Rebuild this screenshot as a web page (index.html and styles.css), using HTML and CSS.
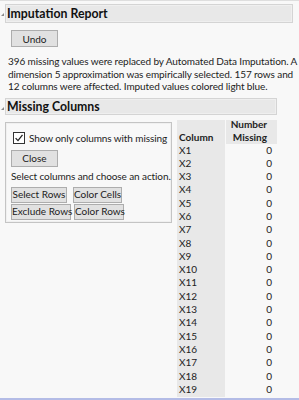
FILE: index.html
```html
<!DOCTYPE html>
<html>
<head>
<meta charset="utf-8">
<link rel="stylesheet" href="styles.css">
</head>
<body>
<div class="page">
  <div class="hdr hdr-main"><span class="tri"></span><span class="title">Imputation Report</span></div>
  <button class="btn undo">Undo</button>
  <p class="msg">396 missing values were replaced by Automated Data Imputation. A<br>dimension 5 approximation was empirically selected. 157 rows and<br>12 columns were affected. Imputed values colored light blue.</p>
  <div class="hdr hdr-mc"><span class="tri"></span><span class="title">Missing Columns</span></div>
  <div class="mc-body">
    <div class="panel">
      <div class="chk-row"><span class="chk"><svg width="10" height="10" viewBox="0 0 10 10"><path d="M1.6 5.1 L4 7.6 L8.5 1.9" fill="none" stroke="#222" stroke-width="1.3"/></svg></span><span class="chk-label">Show only columns with missing</span></div>
      <button class="btn close">Close</button>
      <div class="hint">Select columns and choose an action.</div>
      <div class="btn-row">
        <button class="btn b-sel">Select Rows</button>
        <button class="btn b-cc">Color Cells</button>
      </div>
      <div class="btn-row row2">
        <button class="btn b-ex">Exclude Rows</button>
        <button class="btn b-cr">Color Rows</button>
      </div>
    </div>
    <div class="tbl">
      <div class="col col-name">
        <div class="th">Column</div>
        <div class="td">X1</div><div class="td">X2</div><div class="td">X3</div><div class="td">X4</div><div class="td">X5</div><div class="td">X6</div><div class="td">X7</div><div class="td">X8</div><div class="td">X9</div><div class="td">X10</div><div class="td">X11</div><div class="td">X12</div><div class="td">X13</div><div class="td">X14</div><div class="td">X15</div><div class="td">X16</div><div class="td">X17</div><div class="td">X18</div><div class="td">X19</div>
      </div>
      <div class="col col-num">
        <div class="th">Number<br>Missing</div>
        <div class="td">0</div><div class="td">0</div><div class="td">0</div><div class="td">0</div><div class="td">0</div><div class="td">0</div><div class="td">0</div><div class="td">0</div><div class="td">0</div><div class="td">0</div><div class="td">0</div><div class="td">0</div><div class="td">0</div><div class="td">0</div><div class="td">0</div><div class="td">0</div><div class="td">0</div><div class="td">0</div><div class="td">0</div>
      </div>
    </div>
  </div>
</div>
</body>
</html>
```
FILE: styles.css
```css
html, body {
  margin: 0;
  padding: 0;
  background: #f8f8f8;
}
body {
  font-family: "Lato", "Noto Sans", sans-serif;
  font-size: 10px;
  color: #222;
}
.page {
  width: 299px;
  height: 400px;
  overflow: hidden;
  box-sizing: border-box;
  border-top: 1px solid #dedede;
  border-bottom: 2px solid #b4bce6;
}
.hdr {
  display: flex;
  align-items: center;
  margin-left: 5px;
  background: #e8e8e8;
  border: 1px solid #d4d4d4;
  box-shadow: inset 0 0 0 1px #efefef;
  box-sizing: border-box;
  position: relative;
}
.hdr-main {
  margin-top: 3px;
  width: 288px;
  height: 19px;
}
.hdr-mc {
  margin-top: 5px;
  width: 272px;
  height: 17px;
}
.tri {
  position: absolute;
  left: -5px;
  top: 8px;
  width: 0;
  height: 0;
  border-left: 3px solid transparent;
  border-bottom: 3px solid #8a8a8a;
}
.title {
  font-weight: bold;
  font-size: 12.3px;
  color: #111;
  padding-left: 1px;
}
.btn {
  display: block;
  font-family: inherit;
  font-size: 10px;
  color: #222;
  background: #e1e1e1;
  border: 1px solid #adadad;
  height: 17px;
  padding: 0;
  margin: 0;
  line-height: 14px;
  box-sizing: border-box;
  text-align: center;
  white-space: nowrap;
}
.undo {
  width: 47px;
  margin: 7px 0 0 11px;
}
.msg {
  margin: 8px 0 0 8px;
  line-height: 12.5px;
  white-space: nowrap;
  letter-spacing: -0.1px;
}
.mc-body {
  display: flex;
  align-items: flex-start;
  margin-top: 5px;
  margin-left: 5px;
  gap: 5px;
}
.panel {
  width: 167px;
  height: 101px;
  box-sizing: border-box;
  border: 1px solid #c4c4c4;
  box-shadow: inset 0 0 0 1px #f0f0f0;
  margin-top: 2px;
  padding: 9px 0 0 5px;
  overflow: hidden;
}
.chk-row {
  display: flex;
  align-items: center;
  height: 12px;
  white-space: nowrap;
  letter-spacing: -0.1px;
}
.chk {
  width: 12px;
  height: 12px;
  box-sizing: border-box;
  border: 1px solid #333;
  background: #fff;
  display: flex;
  align-items: center;
  justify-content: center;
  margin-left: 2px;
  margin-right: 4px;
  flex: none;
}
.close {
  width: 47px;
  margin-top: 6px;
}
.hint {
  margin-top: 3px;
  line-height: 13px;
  height: 13px;
  white-space: nowrap;
  letter-spacing: -0.1px;
}
.btn-row {
  display: flex;
  margin-top: 4px;
}
.btn-row .btn {
  height: 16px;
  line-height: 13px;
}
.row2 {
  margin-top: 1px;
}
.b-sel { width: 56px; }
.b-cc { width: 49px; margin-left: 6px; }
.b-ex { width: 60px; }
.b-cr { width: 50px; margin-left: 3px; }
.tbl {
  display: flex;
  gap: 1px;
}
.col {
  display: flex;
  flex-direction: column;
}
.col-name {
  width: 48px;
  background: #e8e8e8;
  height: 277px;
}
.col-num {
  width: 51px;
}
.th {
  font-weight: bold;
  height: 24px;
  box-sizing: border-box;
  line-height: 13px;
  display: flex;
  align-items: flex-end;
  padding-left: 2px;
  padding-bottom: 0;
}
.col-num .th {
  background: #e8e8e8;
  justify-content: flex-end;
  text-align: right;
  padding-right: 10px;
}
.td {
  height: 13.3px;
  line-height: 13.3px;
  padding-left: 2px;
}
.col-num .td {
  text-align: right;
  padding-right: 5px;
}
```
